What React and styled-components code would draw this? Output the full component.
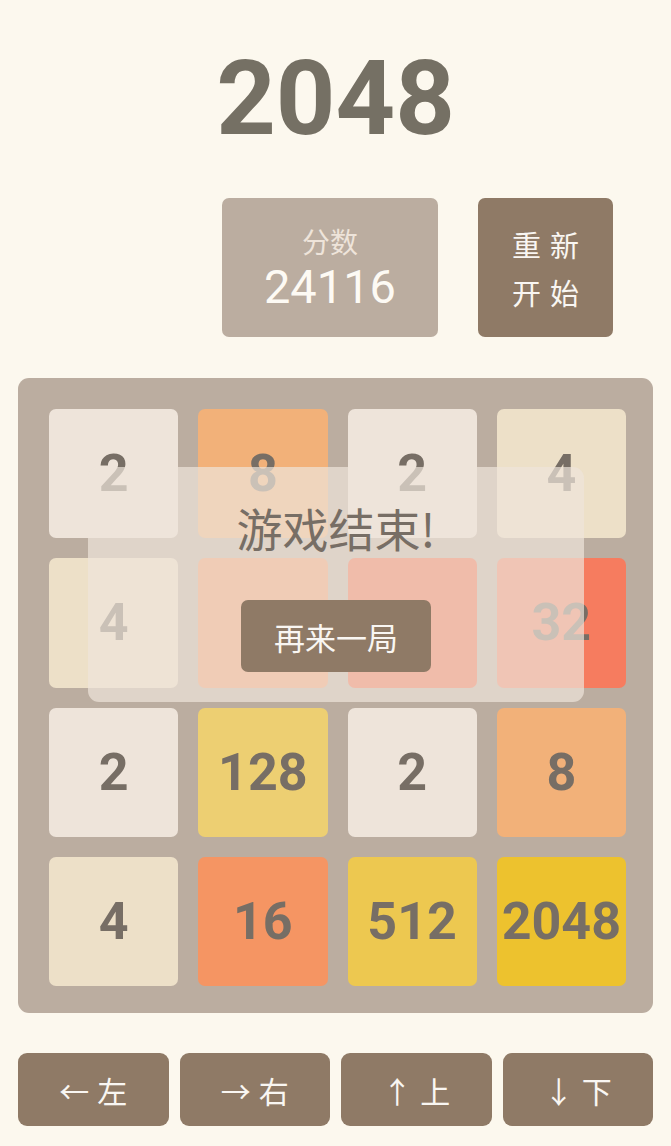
import styled, { createGlobalStyle } from "styled-components";

const GlobalStyle = createGlobalStyle`
  html, body {
    margin: 0;
    padding: 0;
    background: #fcf8ee;
  }
  body {
    font-family: Roboto, "Noto Sans CJK SC", sans-serif;
    color: #776e65;
  }
`;

const tileColors = {
  2: "#eee4da",
  4: "#ede0c8",
  8: "#f2b179",
  16: "#f59563",
  32: "#f67c5f",
  64: "#f65e3b",
  128: "#edcf72",
  256: "#edcc61",
  512: "#edc850",
  1024: "#edc53f",
  2048: "#edc22e",
};

// cells sitting behind the retry button keep their colour but not their number
const grid = [
  [2, 8, 2, 4],
  [4, { v: 16, covered: true }, { v: 64, covered: true }, 32],
  [2, 128, 2, 8],
  [4, 16, 512, 2048],
];

const moves = [
  { arrow: "←", label: "左" },
  { arrow: "→", label: "右" },
  { arrow: "↑", label: "上" },
  { arrow: "↓", label: "下" },
];

export default function App() {
  return (
    <>
      <GlobalStyle />
      <Page>
        <Title>2048</Title>
        <Header>
          <ScoreBox>
            <ScoreLabel>分数</ScoreLabel>
            <ScoreValue>24116</ScoreValue>
          </ScoreBox>
          <RestartButton>
            <span>重新</span>
            <span>开始</span>
          </RestartButton>
        </Header>

        <Board>
          {grid.flat().map((cell, i) => {
            const value = typeof cell === "number" ? cell : cell.v;
            const covered = typeof cell === "object" && cell.covered;
            return (
              <Tile key={i} $bg={tileColors[value]}>
                {covered ? "" : value}
              </Tile>
            );
          })}
          <GameOver>
            <GameOverText>游戏结束!</GameOverText>
            <RetryButton>再来一局</RetryButton>
          </GameOver>
        </Board>

        <Controls>
          {moves.map((m) => (
            <MoveButton key={m.label}>
              <span>{m.arrow}</span>
              <span>{m.label}</span>
            </MoveButton>
          ))}
        </Controls>
      </Page>
    </>
  );
}

const Page = styled.div`
  width: 671px;
  display: flex;
  flex-direction: column;
  align-items: center;
  padding-top: 47px;
  box-sizing: border-box;
`;

const Title = styled.h1`
  margin: 0;
  font-family: Roboto, sans-serif;
  font-weight: 700;
  font-size: 104px;
  line-height: 1;
  color: #757064;
`;

const Header = styled.div`
  align-self: stretch;
  display: flex;
  justify-content: flex-end;
  gap: 40px;
  padding-right: 58px;
  margin-top: 47px;
`;

const ScoreBox = styled.div`
  width: 216px;
  height: 139px;
  background: #bbada0;
  border-radius: 7px;
  display: flex;
  flex-direction: column;
  align-items: center;
  justify-content: center;
`;

const ScoreLabel = styled.div`
  font-family: "Noto Sans CJK SC", sans-serif;
  font-size: 28px;
  line-height: 38px;
  color: #eee4da;
`;

const ScoreValue = styled.div`
  font-family: Roboto, sans-serif;
  font-size: 47px;
  line-height: 54px;
  color: #fdfaf4;
`;

const RestartButton = styled.button`
  width: 135px;
  height: 139px;
  border: none;
  border-radius: 7px;
  background: #8f7a66;
  color: #f9f6f2;
  font-family: "Noto Sans CJK SC", sans-serif;
  font-size: 29px;
  line-height: 48px;
  letter-spacing: 9px;
  padding: 0 0 0 9px;
  display: flex;
  flex-direction: column;
  align-items: center;
  justify-content: center;
`;

const Board = styled.div`
  position: relative;
  margin-top: 41px;
  width: 635px;
  height: 635px;
  box-sizing: border-box;
  padding: 31px 27px 27px 31px;
  background: #bbada0;
  border-radius: 11px;
  display: grid;
  grid-template-columns: repeat(4, 1fr);
  grid-template-rows: repeat(4, 1fr);
  gap: 20px;
`;

const Tile = styled.div`
  background: ${(p) => p.$bg};
  border-radius: 7px;
  display: flex;
  align-items: center;
  justify-content: center;
  font-family: Roboto, sans-serif;
  font-weight: 700;
  font-size: 52px;
  color: #776e65;
`;

const GameOver = styled.div`
  position: absolute;
  top: 89px;
  left: 70px;
  width: 496px;
  height: 235px;
  border-radius: 11px;
  background: rgba(238, 228, 218, 0.7);
  display: flex;
  flex-direction: column;
  align-items: center;
`;

const GameOverText = styled.div`
  margin-top: 30px;
  font-family: "Noto Sans CJK SC", sans-serif;
  font-size: 46px;
  line-height: 60px;
  color: #776e65;
`;

const RetryButton = styled.button`
  margin-top: 43px;
  width: 190px;
  height: 72px;
  border: none;
  border-radius: 7px;
  background: #8f7a66;
  color: #f9f6f2;
  font-family: "Noto Sans CJK SC", sans-serif;
  font-size: 31px;
`;

const Controls = styled.div`
  margin-top: 40px;
  width: 635px;
  display: grid;
  grid-template-columns: repeat(4, 1fr);
  gap: 11px;
`;

const MoveButton = styled.button`
  height: 73px;
  border: none;
  border-radius: 9px;
  background: #8f7a66;
  color: #f9f6f2;
  font-family: "Noto Sans CJK SC", sans-serif;
  font-size: 30px;
  display: flex;
  align-items: center;
  justify-content: center;
  gap: 8px;
`;
